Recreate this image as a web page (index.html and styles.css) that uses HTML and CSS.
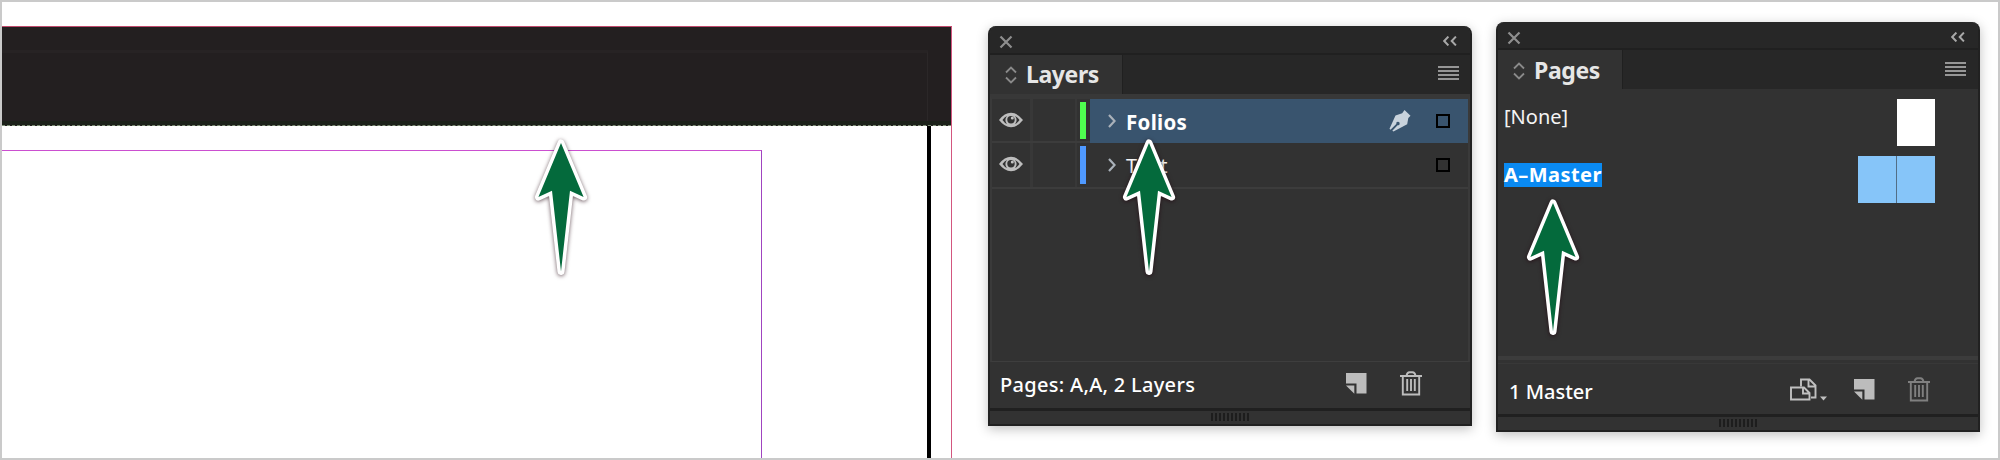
FILE: index.html
```html
<!DOCTYPE html>
<html lang="en">
<head>
<meta charset="utf-8">
<title>Layers and Pages panels</title>
<link rel="stylesheet" href="styles.css">
</head>
<body>
<svg class="defs" width="0" height="0">
  <symbol id="arrow" viewBox="0 0 64 150"><path d="M32 11 54.6 65 41 58.8 32 139.5 23 58.8 9.4 65Z"/></symbol>
  <symbol id="close" viewBox="0 0 14 14"><path d="M1.5 1.5 12.5 12.5M12.5 1.5 1.5 12.5" fill="none" stroke="#8e8e8e" stroke-width="2.200"/></symbol>
  <symbol id="collapse" viewBox="0 0 14 10"><path d="M5.4.6 1.2 5 5.4 9.4M12.900.6 8.7 5 12.900 9.4" fill="none" stroke="#a8a8a8" stroke-width="2"/></symbol>
  <symbol id="updown" viewBox="0 0 12 18"><path d="M1 6.500 6 1.500 11 6.500M1 11.500 6 16.500 11 11.500" fill="none" stroke="#8a8a8a" stroke-width="1.8"/></symbol>
  <symbol id="menu" viewBox="0 0 21 15"><path d="M0 1H21M0 5H21M0 9H21M0 13H21" stroke="#969696" stroke-width="2"/></symbol>
  <symbol id="eye" viewBox="0 0 24 16"><path d="M0 8Q5.500 .8 12 .8T24 8Q18.500 15.200 12 15.200T0 8Z" fill="#bdbdbd"/><path d="M3.500 8Q5.500 5 8 3.900A6 6 0 0 0 8 12.100Q5.500 11 3.500 8ZM20.500 8Q18.500 5 16 3.900A6 6 0 0 1 16 12.100Q18.500 11 20.500 8Z" fill="#323232"/><circle cx="12" cy="7.800" r="3.700" fill="#323232"/><circle cx="13.300" cy="6" r="1.500" fill="#c4c4c4"/></symbol>
  <symbol id="chevron" viewBox="0 0 8 14"><path d="M1 1 6.600 7 1 13" fill="none" stroke="#aab2ba" stroke-width="2.200"/></symbol>
  <symbol id="pen" viewBox="0 0 22 22"><path d="M15.500 0 21.500 5.700 19.300 8 18.200 14.200 4.500 21.500 3.300 20.700 8.600 15.200A1.700 1.700 0 1 0 7.300 13.900L1.500 19.700 .5 18.800 6.500 5.500 13.200 3.200Z" fill="#c9d3dc"/></symbol>
  <symbol id="new" viewBox="0 0 21 21"><path d="M0 0H20.500V20.500H10.500V10.500H0Z" fill="#bcbcbc"/><path d="M0 12.500H8.300V20.800Z" fill="#bcbcbc"/></symbol>
  <symbol id="trash" viewBox="0 0 22 25"><path d="M0 5H22M6.500 5Q7 1.200 9.500 1.200H12.500Q15 1.200 15.500 5M2.800 5V23.500H19.200V5M7.200 8V20M11 8V20M14.800 8V20" fill="none" stroke="currentColor" stroke-width="1.900"/></symbol>
  <symbol id="pagesize" viewBox="0 0 37 23"><g fill="none" stroke="#c0c0c0" stroke-width="1.900"><path d="M1 9.500H14L19.500 15V21.500H1ZM13 9.500V15.500H19"/><path d="M11 8.500V1.500H19.500L25.500 7.500V19.500H21M18.500 1.500V8.500H25"/></g><path d="M30 18.500H37L33.500 22.500Z" fill="#c0c0c0"/></symbol>
</svg>
<main class="frame">
  <section class="canvas">
    <div class="page">
      <div class="bar"><div class="bar-guide"></div></div>
      <div class="sheet">
        <div class="margin-box"></div>
        <div class="sheet-edge"></div>
      </div>
    </div>
  </section>

  <section class="panel layers">
    <header class="titlebar"><svg class="i-close"><use href="#close"/></svg><svg class="i-collapse"><use href="#collapse"/></svg></header>
    <div class="tabs">
      <div class="tab"><svg class="i-updown"><use href="#updown"/></svg><span class="tab-label">Layers</span></div>
      <svg class="i-menu"><use href="#menu"/></svg>
    </div>
    <div class="list">
      <div class="row selected">
        <div class="cell-eye"><svg class="i-eye"><use href="#eye"/></svg></div>
        <div class="cell-lock"></div>
        <div class="swatch green"></div>
        <div class="name"><svg class="i-chevron"><use href="#chevron"/></svg><span class="label folios">Folios</span><svg class="i-pen"><use href="#pen"/></svg><i class="box"></i></div>
      </div>
      <div class="row">
        <div class="cell-eye"><svg class="i-eye"><use href="#eye"/></svg></div>
        <div class="cell-lock"></div>
        <div class="swatch blue"></div>
        <div class="name"><svg class="i-chevron"><use href="#chevron"/></svg><span class="label">Text</span><i class="box"></i></div>
      </div>
    </div>
    <footer class="footer">
      <span class="status">Pages: A,A, 2 Layers</span>
      <svg class="i-new"><use href="#new"/></svg>
      <svg class="i-trash"><use href="#trash"/></svg>
    </footer>
    <div class="resize"><div class="grip"></div></div>
  </section>

  <section class="panel pages">
    <header class="titlebar"><svg class="i-close"><use href="#close"/></svg><svg class="i-collapse"><use href="#collapse"/></svg></header>
    <div class="tabs">
      <div class="tab"><svg class="i-updown"><use href="#updown"/></svg><span class="tab-label">Pages</span></div>
      <svg class="i-menu"><use href="#menu"/></svg>
    </div>
    <div class="masters">
      <div class="master"><span class="none">[None]</span><div class="thumb"></div></div>
      <div class="master second"><span class="chosen">A–Master</span><div class="thumb spread"><i></i><i></i></div></div>
    </div>
    <div class="divider"></div>
    <footer class="footer">
      <span class="status">1 Master</span>
      <svg class="i-pagesize"><use href="#pagesize"/></svg>
      <svg class="i-new"><use href="#new"/></svg>
      <svg class="i-trash"><use href="#trash"/></svg>
    </footer>
    <div class="resize"><div class="grip"></div></div>
  </section>

  <svg class="arrow a1"><use href="#arrow"/></svg>
  <svg class="arrow a2"><use href="#arrow"/></svg>
  <svg class="arrow a3"><use href="#arrow"/></svg>
</main>
</body>
</html>
```

FILE: styles.css
```css
* { box-sizing: border-box; }
body { margin: 0; background: #fff; font-family: "Noto Sans", "Open Sans", sans-serif; }
svg { display: block; flex: none; }
.defs { position: absolute; }
.frame { position: relative; display: flex; align-items: flex-start; width: 2000px; height: 460px; border: 2px solid #cacaca; overflow: hidden; }

.canvas { width: 986px; flex: none; padding-top: 24px; }
.page { width: 950px; height: 432px; border-top: 1px solid #c04a6c; border-right: 1px solid #d3567f; }
.bar { height: 99px; padding-top: 23px; background: #231f20; border-bottom: 1px dashed #7c8f74; box-shadow: inset 0 -4px #1b2119; }
.bar-guide { width: 926px; height: 71px; border-top: 3px solid #272324; border-right: 1px solid #2b2728; }
.sheet { display: flex; justify-content: space-between; height: 332px; padding-right: 20px; }
.margin-box { width: 760px; margin-top: 24px; border-top: 1px solid #cb4fd0; border-right: 1px solid #a044c0; }
.sheet-edge { width: 4px; background: #000; }

.panel { flex: none; display: flex; flex-direction: column; width: 484px; background: #323232; border: 2px solid #212121; border-top: 0; border-radius: 8px 8px 0 0; box-shadow: 0 3px 12px rgba(0,0,0,.25); color: #f4f4f4; }
.layers { height: 400px; margin-top: 24px; }
.pages { height: 410px; margin: 20px 0 0 24px; }
.titlebar { display: flex; justify-content: space-between; flex: none; background: #272727; border-bottom: 2px solid #202020; border-radius: 8px 8px 0 0; }
.layers .titlebar { height: 29px; padding: 9px 13px 0 9px; }
.pages .titlebar { height: 28px; padding: 9px 13px 0 9px; }
.tabs { display: flex; justify-content: space-between; flex: none; background: #272727; }
.layers .tabs { height: 39px; padding-right: 11px; }
.pages .tabs { height: 39px; padding-right: 12px; }
.tab { display: flex; background: #323232; border-right: 1px solid #202020; padding-left: 15px; }
.layers .tab { width: 133px; }
.pages .tab { width: 125px; }
.tab-label { font-weight: 700; font-size: 23px; line-height: 32px; color: #e6e6e6; letter-spacing: -.4px; }
.layers .tab-label { margin: 3px 0 0 9px; }
.pages .tab-label { margin: 4px 0 0 9px; }
.i-close { width: 14px; height: 14px; }
.i-collapse { width: 14px; height: 10px; margin-top: 1px; }
.i-updown { width: 12px; height: 18px; margin-top: 11px; }
.pages .i-updown { margin-top: 12px; }
.i-menu { width: 21px; height: 15px; margin-top: 11px; }
.pages .i-menu { margin-top: 12px; }

.list { height: 268px; flex: none; border: 2px solid #3a3a3a; border-top: 5px solid #383838; border-bottom: 1px solid #3e3e3e; }
.row { display: flex; height: 44px; border-bottom: 2px solid #3c3c3c; }
.row + .row { height: 46px; }
.cell-eye { width: 41px; border-right: 3px solid #383838; padding: 13px 0 0 7px; }
.cell-lock { width: 44px; border-right: 2px solid #383838; }
.i-eye { width: 24px; height: 16px; }
.swatch { width: 6px; margin: 3px 4px 2px 3px; }
.row + .row .swatch { margin-bottom: 3px; }
.green { background: #4fff4f; }
.blue { background: #4f99ff; }
.name { flex: 1; display: flex; align-items: flex-start; padding: 14px 18px 0 18px; }
.selected .name { background: #39546e; margin-bottom: -2px; }
.i-chevron { width: 8px; height: 14px; margin-top: 1px; }
.label { flex: 1; font-size: 20px; line-height: 28px; margin: -5px 0 0 10px; letter-spacing: 1px; }
.folios { font-weight: 700; color: #fff; font-size: 20.5px; letter-spacing: .3px; }
.i-pen { width: 22px; height: 22px; margin: -3px 25px 0 0; }
.box { width: 14px; height: 14px; border: 2px solid #000; margin-top: 1px; }

.footer { display: flex; align-items: flex-start; flex: none; }
.status { flex: 1; font-weight: 500; font-size: 20px; line-height: 28px; color: #fff; }
.layers .status { letter-spacing: .3px; margin-top: -1px; }
.layers .footer { height: 46px; padding: 10px 48px 0 10px; }
.pages .footer { height: 51px; padding: 14px 48px 0 11px; border-top: 1px solid #383838; }
.i-new { width: 21px; height: 21px; margin: 1px 33px 0 0; }
.i-trash { width: 22px; height: 25px; color: #bdbdbd; margin-top: -1px; }
.pages .i-trash { color: #808080; }
.i-pagesize { width: 37px; height: 23px; margin: 0 27px 0 0; }
.resize { flex: 1; border-top: 3px solid #202020; display: flex; justify-content: center; padding-top: 2px; }
.grip { width: 38px; height: 8px; background: repeating-linear-gradient(90deg, #1d1d1d 0 2px, #323232 2px 4px); }

.masters { height: 267px; flex: none; padding: 10px 43px 0 6px; }
.master { display: flex; justify-content: space-between; align-items: flex-start; height: 57px; }
.none { font-size: 20px; line-height: 28px; margin: 4px 0 0 0; }
.chosen { font-size: 20px; font-weight: 700; line-height: 24px; height: 24px; width: 98px; background: #0a8af2; color: #fff; margin-top: 7px; white-space: nowrap; letter-spacing: .45px; }
.thumb { width: 38px; height: 47px; background: #fff; }
.spread { display: flex; gap: 1px; width: 77px; background: #526e86; }
.spread i { flex: 1; background: #86c5f9; }
.divider { height: 4px; flex: none; background: #3c3c3c; margin-bottom: 3px; }

.arrow { position: absolute; width: 64px; height: 150px; fill: #046a3c; stroke: #fff; stroke-width: 7px; stroke-linejoin: round; paint-order: stroke; filter: drop-shadow(0 1px 2px rgba(30,0,10,.65)); }
.a1 { left: 527px; top: 130px; }
.a2 { left: 1115px; top: 130px; }
.a3 { left: 1519px; top: 190px; }
```
